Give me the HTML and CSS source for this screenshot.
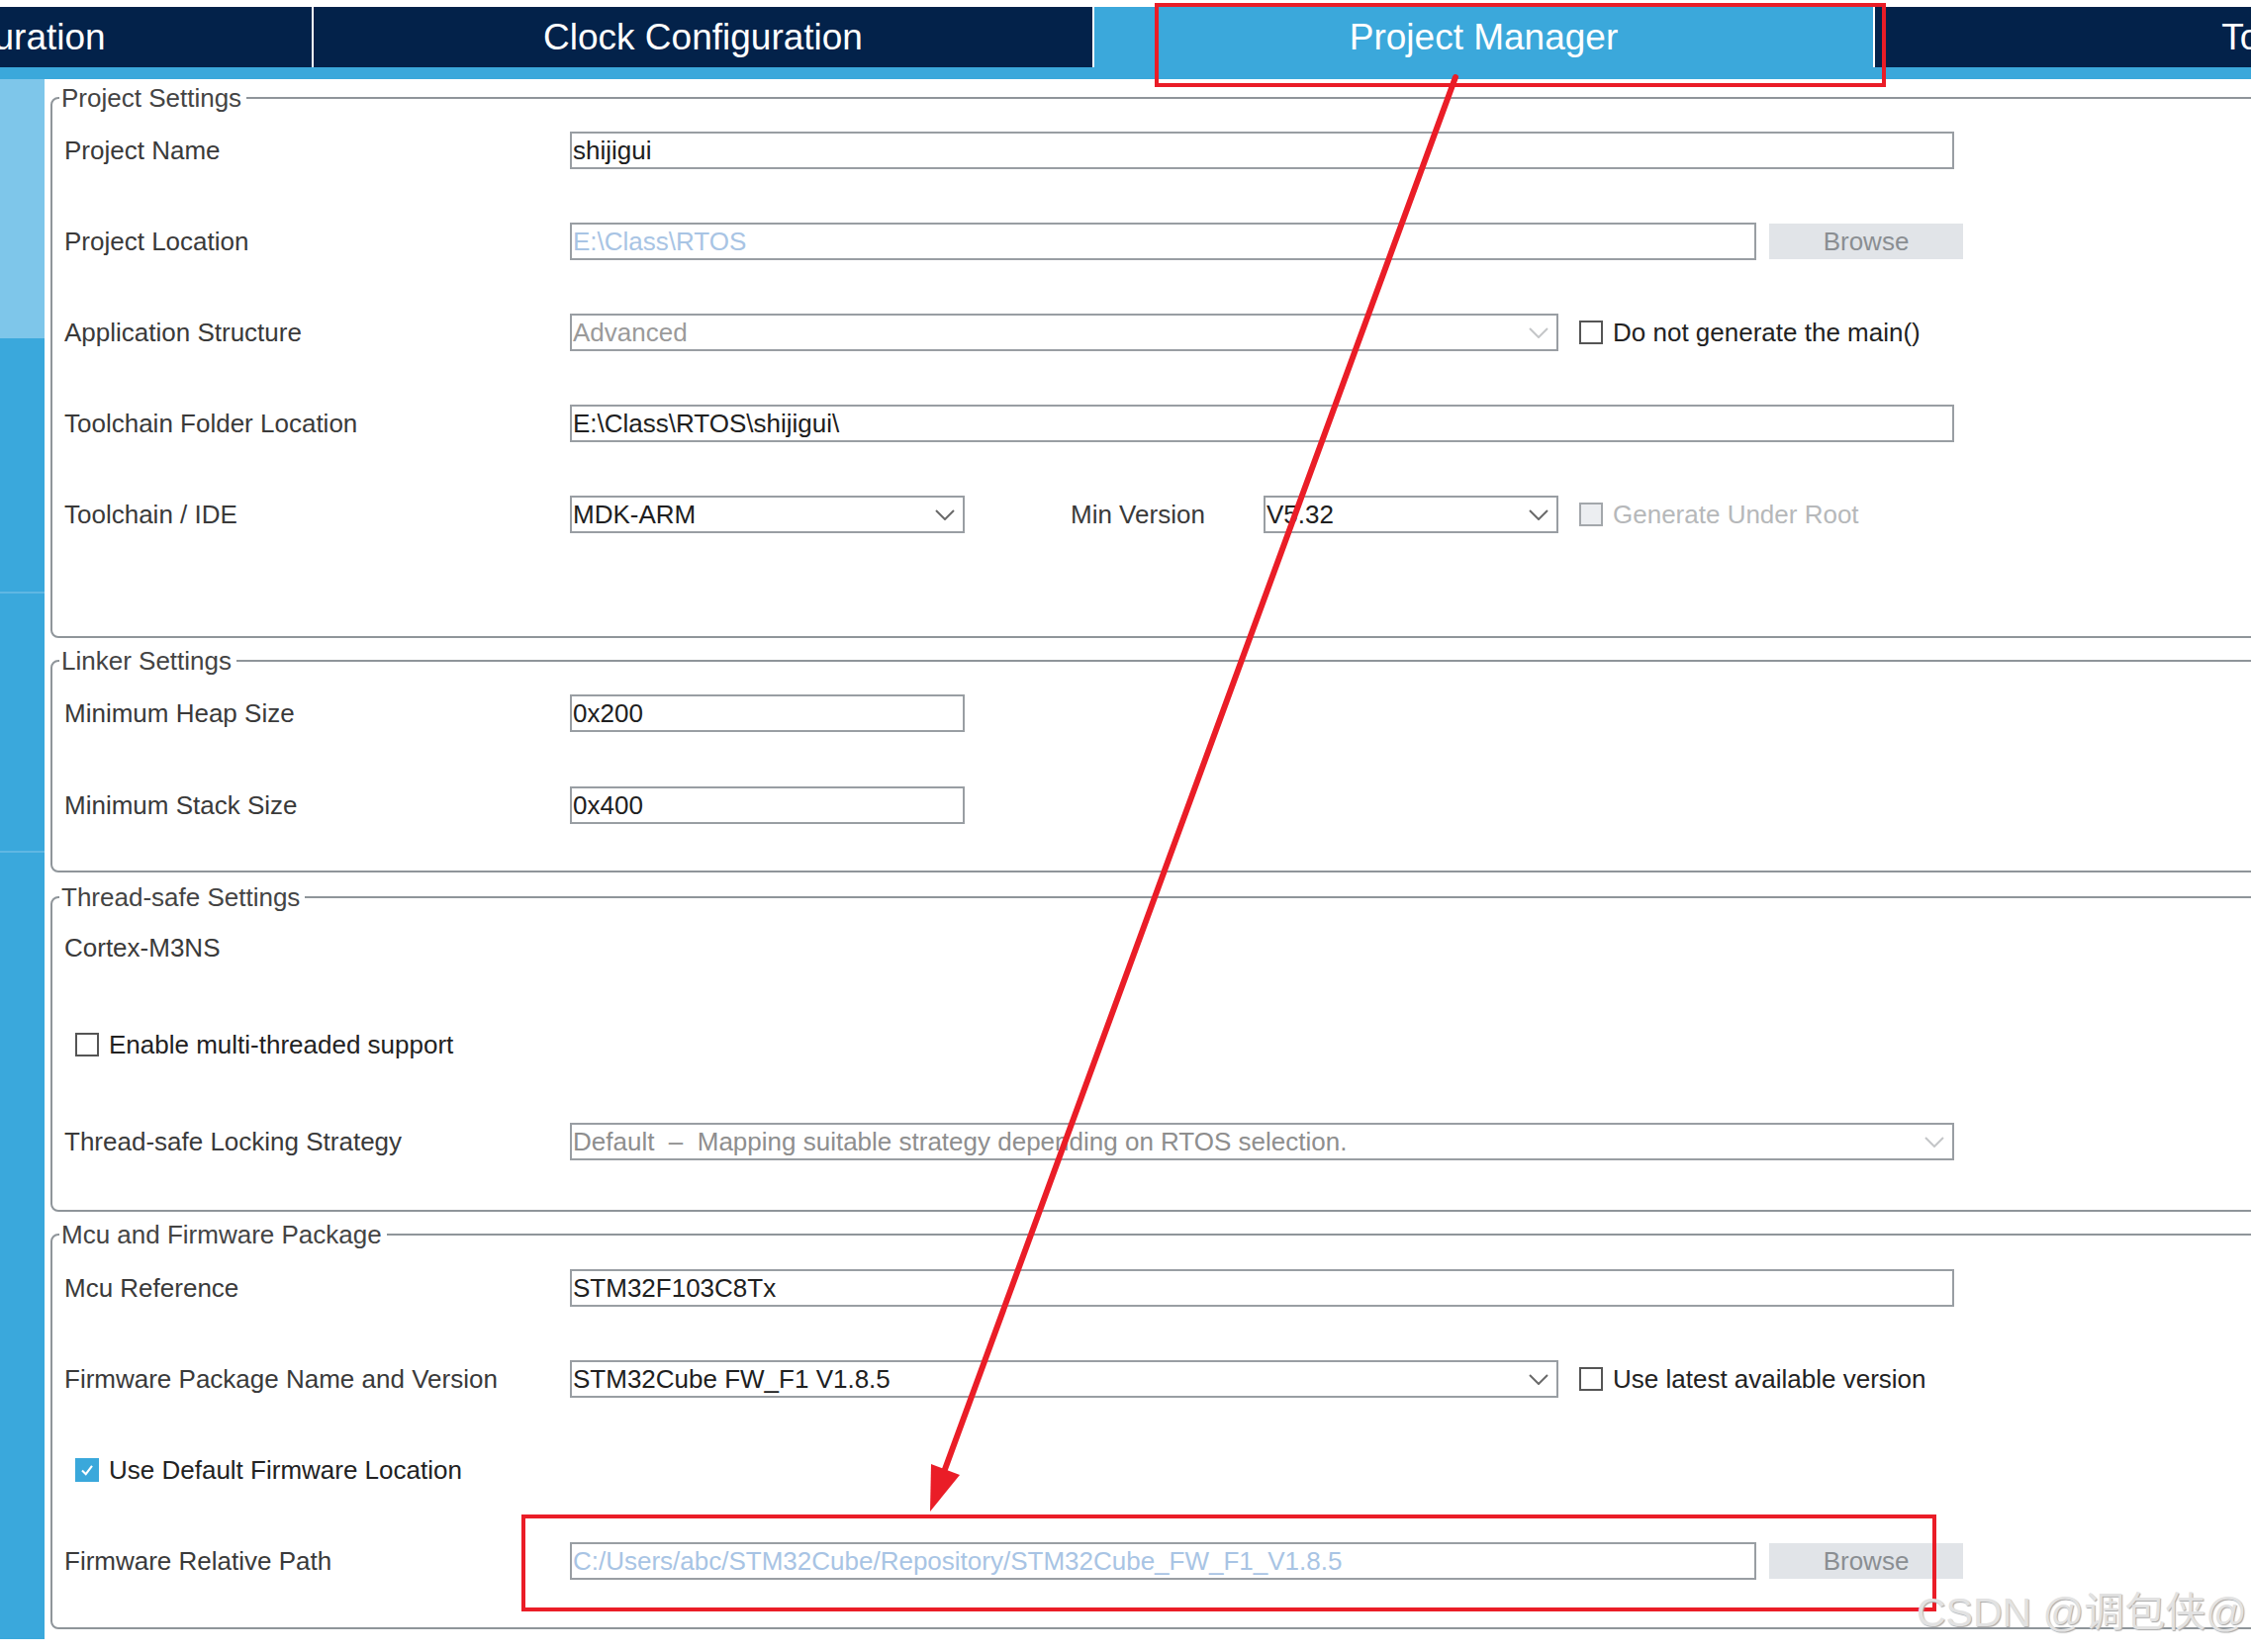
FILE: index.html
```html
<!DOCTYPE html>
<html lang="en">
<head>
<meta charset="utf-8">
<title>Project Manager</title>
<link rel="stylesheet" href="styles.css">
</head>
<body>
<div class="page">
  <header class="tabbar">
    <nav class="tabs">
      <div class="tab">Pinout &amp; Configuration</div>
      <div class="tab">Clock Configuration</div>
      <div class="tab active">Project Manager</div>
      <div class="tab">Tools</div>
    </nav>
  </header>
  <div class="strip"></div>

  <div class="main">
    <aside class="sidebar">
      <div class="side-sec s1"></div>
      <div class="side-sec s2"></div>
      <div class="side-sec s3"></div>
      <div class="side-sec s4"></div>
    </aside>

    <div class="content">
      <fieldset class="group g1">
        <legend>Project Settings</legend>
        <div class="rows">
          <div class="row">
            <span class="label">Project Name</span>
            <div class="field w-full">shijigui</div>
          </div>
          <div class="row">
            <span class="label">Project Location</span>
            <div class="field w-loc dis-blue">E:\Class\RTOS</div>
            <div class="btn">Browse</div>
          </div>
          <div class="row">
            <span class="label">Application Structure</span>
            <div class="field select w-sel dis-gray">
              <span>Advanced</span>
              <svg class="chev light" viewBox="0 0 20 11"><path d="M1 1 L10 10 L19 1"/></svg>
            </div>
            <span class="cb cb-gap"></span>
            <span class="cb-text">Do not generate the main()</span>
          </div>
          <div class="row">
            <span class="label">Toolchain Folder Location</span>
            <div class="field w-full">E:\Class\RTOS\shijigui\</div>
          </div>
          <div class="row">
            <span class="label">Toolchain / IDE</span>
            <div class="field select w-small">
              <span>MDK-ARM</span>
              <svg class="chev" viewBox="0 0 20 11"><path d="M1 1 L10 10 L19 1"/></svg>
            </div>
            <span class="label-min">Min Version</span>
            <div class="field select w-min">
              <span>V5.32</span>
              <svg class="chev" viewBox="0 0 20 11"><path d="M1 1 L10 10 L19 1"/></svg>
            </div>
            <span class="cb cb-gap dis"></span>
            <span class="cb-text muted">Generate Under Root</span>
          </div>
        </div>
      </fieldset>

      <fieldset class="group g2">
        <legend>Linker Settings</legend>
        <div class="rows">
          <div class="row">
            <span class="label">Minimum Heap Size</span>
            <div class="field w-small">0x200</div>
          </div>
          <div class="row">
            <span class="label">Minimum Stack Size</span>
            <div class="field w-small">0x400</div>
          </div>
        </div>
      </fieldset>

      <fieldset class="group g3">
        <legend>Thread-safe Settings</legend>
        <div class="rows">
          <div class="row">
            <span class="label">Cortex-M3NS</span>
          </div>
          <div class="row">
            <span class="cb cb-left"></span>
            <span class="cb-text">Enable multi-threaded support</span>
          </div>
          <div class="row">
            <span class="label">Thread-safe Locking Strategy</span>
            <div class="field select w-full dis-gray2">
              <span>Default &nbsp;&ndash;&nbsp; Mapping suitable strategy depending on RTOS selection.</span>
              <svg class="chev light" viewBox="0 0 20 11"><path d="M1 1 L10 10 L19 1"/></svg>
            </div>
          </div>
        </div>
      </fieldset>

      <fieldset class="group g4">
        <legend>Mcu and Firmware Package</legend>
        <div class="rows">
          <div class="row">
            <span class="label">Mcu Reference</span>
            <div class="field w-full">STM32F103C8Tx</div>
          </div>
          <div class="row">
            <span class="label">Firmware Package Name and Version</span>
            <div class="field select w-sel">
              <span>STM32Cube FW_F1 V1.8.5</span>
              <svg class="chev" viewBox="0 0 20 11"><path d="M1 1 L10 10 L19 1"/></svg>
            </div>
            <span class="cb cb-gap"></span>
            <span class="cb-text">Use latest available version</span>
          </div>
          <div class="row">
            <span class="cb cb-left on">
              <svg viewBox="0 0 24 24"><path d="M6 12.5 L10.5 17 L18 7"/></svg>
            </span>
            <span class="cb-text">Use Default Firmware Location</span>
          </div>
          <div class="row">
            <span class="label">Firmware Relative Path</span>
            <div class="field w-loc dis-blue">C:/Users/abc/STM32Cube/Repository/STM32Cube_FW_F1_V1.8.5</div>
            <div class="btn">Browse</div>
          </div>
        </div>
      </fieldset>
    </div>
  </div>

  <svg class="annot" viewBox="0 0 2275 1670" width="2275" height="1670">
    <rect x="1169" y="5" width="735" height="81" />
    <rect x="529" y="1533" width="1426" height="94" />
    <line x1="1471" y1="78" x2="954" y2="1488" />
    <polygon points="940,1528 970,1491 941,1480" />
  </svg>
  <div class="watermark">CSDN @调包侠@</div>
</div>
</body>
</html>
```

FILE: styles.css
```css
html, body {
  margin: 0;
  padding: 0;
  background: #ffffff;
}

body {
  font-family: "Liberation Sans", Arial, "Noto Sans CJK SC", sans-serif;
  font-size: 26px;
  color: #3a3a3a;
  overflow: hidden;
}

.page {
  position: relative;
  width: 2275px;
  height: 1670px;
  overflow: hidden;
}

/* ---------- Tab bar ---------- */
.tabbar {
  height: 68px;
  padding-top: 7px;
  box-sizing: border-box;
  background: #ffffff;
  overflow: hidden;
}

.tabs {
  display: flex;
  gap: 2px;
  margin-left: -472px;
  height: 61px;
}

.tab {
  flex: 0 0 787px;
  height: 61px;
  background: #03224a;
  color: #ffffff;
  font-size: 37px;
  display: flex;
  align-items: center;
  justify-content: center;
  white-space: nowrap;
}

.tab.active {
  background: #3ba8db;
}

.strip {
  height: 12px;
  background: #3ba8db;
}

/* ---------- Main area ---------- */
.main {
  display: flex;
  align-items: flex-start;
}

.sidebar {
  flex: 0 0 45px;
  height: 1577px;
  display: flex;
  flex-direction: column;
}

.side-sec {
  background: #3aa8dc;
}

.s1 {
  height: 262px;
  background: #7ec6ea;
}

.s2 {
  height: 256px;
}

.s3 {
  height: 260px;
  border-top: 2px solid #5fb7e3;
}

.s4 {
  flex: 1;
  border-top: 2px solid #5fb7e3;
}

.content {
  flex: 1;
  padding-left: 6px;
  min-width: 0;
}

/* ---------- Group boxes ---------- */
.group {
  border: 2px solid #8f959a;
  border-radius: 8px;
  margin: 0;
  padding: 0;
  width: 2400px;
  min-width: 0;
  box-sizing: border-box;
}

.group legend {
  font-size: 26px;
  line-height: 30px;
  padding: 0 5px 0 2px;
  margin-left: 7px;
  color: #444444;
}

.rows {
  display: flex;
  flex-direction: column;
  padding-left: 12px;
}

.g1 { margin-top: 4px; }
.g1 .rows { padding-top: 19px; padding-bottom: 104px; gap: 54px; }

.g2 { margin-top: 8px; }
.g2 .rows { padding-top: 19px; padding-bottom: 47px; gap: 55px; }

.g3 { margin-top: 10px; }
.g3 .rows { padding-top: 17px; padding-bottom: 50px; gap: 60px; }

.g4 { margin-top: 8px; }
.g4 .rows { padding-top: 20px; padding-bottom: 48px; gap: 54px; }

.row {
  display: flex;
  align-items: center;
  height: 38px;
  white-space: nowrap;
}

.label {
  flex: 0 0 511px;
  color: #3a3a3a;
}

.label-min {
  margin-left: 107px;
  flex: 0 0 195px;
  color: #3a3a3a;
}

/* ---------- Fields ---------- */
.field {
  flex: none;
  height: 38px;
  box-sizing: border-box;
  border: 2px solid #999ea3;
  background: #ffffff;
  padding: 0 8px 0 1px;
  display: flex;
  align-items: center;
  color: #202020;
  overflow: hidden;
  white-space: nowrap;
}

.select {
  justify-content: space-between;
}

.w-full { width: 1399px; }
.w-loc { width: 1199px; }
.w-sel { width: 999px; }
.w-small { width: 399px; }
.w-min { width: 298px; }

.dis-blue { color: #a8c4e4; }
.dis-gray { color: #9a9a9a; }
.dis-gray2 { color: #8e8e8e; }

.chev {
  width: 20px;
  height: 11px;
  flex: none;
  fill: none;
  stroke: #6a6a6a;
  stroke-width: 2;
}

.chev.light {
  stroke: #c4c6c8;
}

.btn {
  flex: none;
  margin-left: 13px;
  width: 196px;
  height: 36px;
  background: #e1e4e8;
  color: #8a8e92;
  display: flex;
  align-items: center;
  justify-content: center;
}

/* ---------- Checkboxes ---------- */
.cb {
  flex: none;
  width: 24px;
  height: 24px;
  box-sizing: border-box;
  border: 2px solid #555555;
  background: #ffffff;
  display: inline-flex;
  align-items: center;
  justify-content: center;
}

.cb-gap { margin-left: 21px; }
.cb-left { margin-left: 11px; }

.cb.dis {
  border-color: #a3a7ab;
  background: #eceef1;
}

.cb.on {
  border-color: #3aa8db;
  background: #3aa8db;
}

.cb.on svg {
  width: 22px;
  height: 22px;
  fill: none;
  stroke: #ffffff;
  stroke-width: 2.5;
}

.cb-text {
  margin-left: 10px;
  color: #222222;
}

.cb-text.muted {
  color: #b6b8ba;
}

/* ---------- Annotations (overlay) ---------- */
.annot {
  position: absolute;
  left: 0;
  top: 0;
  pointer-events: none;
}

.annot rect {
  fill: none;
  stroke: #ea1d27;
  stroke-width: 4;
}

.annot line {
  stroke: #ea1d27;
  stroke-width: 6;
  stroke-linecap: round;
}

.annot polygon {
  fill: #ea1d27;
}

.watermark {
  position: absolute;
  left: 1937px;
  top: 1608px;
  font-family: "Liberation Sans", Arial, "Noto Sans CJK SC", sans-serif;
  font-size: 41px;
  line-height: 44px;
  color: #e2e2e2;
  text-shadow: 1px 1px 1px #a9a9a9;
  white-space: nowrap;
  pointer-events: none;
}
```
